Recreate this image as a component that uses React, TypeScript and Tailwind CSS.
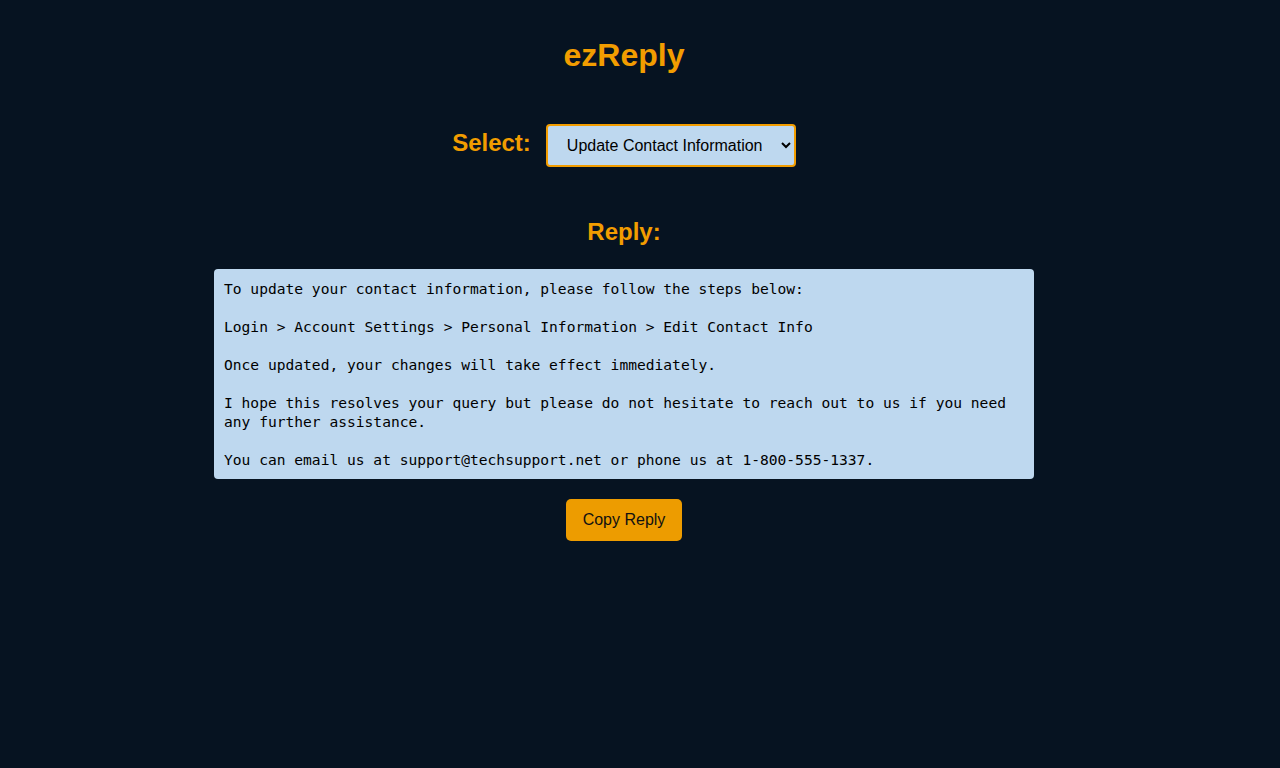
import { useState } from "react";

const replies: Record<string, string> = {
  "Update Contact Information":
    "To update your contact information, please follow the steps below:\n\nLogin > Account Settings > Personal Information > Edit Contact Info\n\nOnce updated, your changes will take effect immediately.\n\nI hope this resolves your query but please do not hesitate to reach out to us if you need any further assistance.\n\nYou can email us at support@techsupport.net or phone us at 1-800-555-1337.",
  "Reset Password":
    "To reset your password, please click 'Forgot Password' on the login page and follow the instructions sent to your email.",
};

export default function App() {
  const [choice, setChoice] = useState("Update Contact Information");

  return (
    <div className="min-h-screen w-full bg-[#061321] pr-[32px] flex flex-col items-center font-['Liberation_Sans',Arial,sans-serif]">
      <h1 className="mt-[37px] text-[32px] leading-[37px] font-bold text-[#f29d00]">ezReply</h1>

      {/* Select row */}
      <div className="mt-[50px] flex items-center gap-[15px]">
        <label className="pb-[5px] text-[24px] leading-[28px] font-bold text-[#f29d00]">Select:</label>
        <select
          value={choice}
          onChange={(e) => setChoice(e.target.value)}
          className="w-[250px] h-[43px] pl-[15px] pr-[10px] rounded-[4px] border-2 border-[#f29d00] bg-[#bed8ef] text-[16px] text-black"
        >
          {Object.keys(replies).map((k) => (
            <option key={k}>{k}</option>
          ))}
        </select>
      </div>

      <h2 className="mt-[51px] text-[24px] leading-[28px] font-bold text-[#f29d00]">Reply:</h2>

      <div className="mt-[23px] w-[820px] rounded-[4px] bg-[#bed8ef] p-[10px] text-[14.6px] leading-[19px] text-black whitespace-pre-wrap font-['DejaVu_Sans_Mono',monospace]">
        {replies[choice]}
      </div>

      <button className="mt-[20px] w-[116px] h-[42px] rounded-[5px] bg-[#ed9c00] text-[16px] text-[#111]">
        Copy Reply
      </button>
    </div>
  );
}
